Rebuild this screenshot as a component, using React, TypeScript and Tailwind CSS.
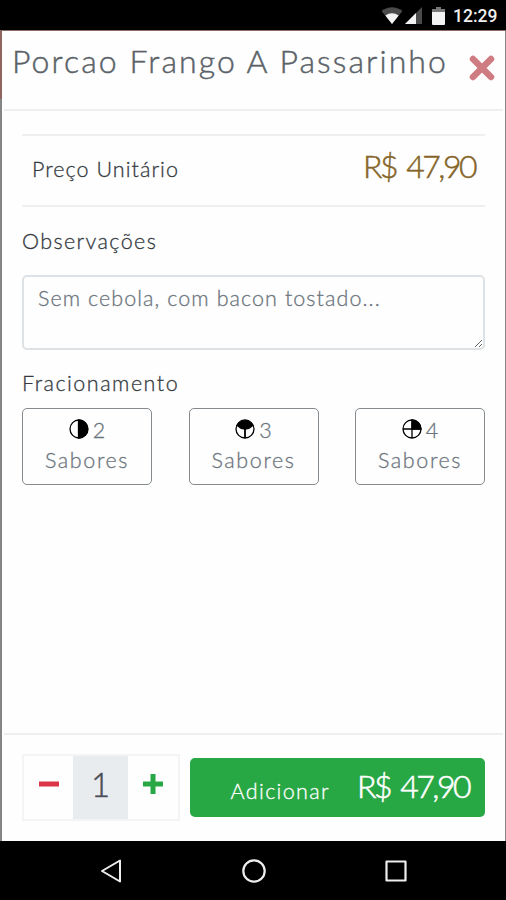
import React, { useState } from 'react';

const PRECO = 'R$ 47,90';

const StatusBar: React.FC = () => (
    <div className="h-[30px] shrink-0 bg-black flex items-center justify-end pr-[9px] pt-[2px]">
        <svg width="22" height="18" viewBox="0 0 22 18">
            <path d="M11 17 L0.5 4 Q11 -3.5 21.5 4 Z" fill="#4a4a4a" />
            <path d="M11 17 L4.3 8.5 Q11 3.8 17.7 8.5 Z" fill="#f2f2f2" />
        </svg>
        <svg className="ml-[2px]" width="17" height="18" viewBox="0 0 17 18">
            <path d="M17 0 V17 H0 Z" fill="#4a4a4a" />
            <path d="M11 6 V17 H0 Z" fill="#f2f2f2" />
        </svg>
        <svg className="ml-[10px]" width="13" height="18" viewBox="0 0 13 18">
            <path d="M4 0 H9 V2 H13 V5 H0 V2 H4 Z" fill="#777777" />
            <path d="M0 5 H13 V17 Q13 18 12 18 H1 Q0 18 0 17 Z" fill="#f2f2f2" />
        </svg>
        <span className="ml-[8px] w-[44px] font-['Roboto',sans-serif] font-medium text-[17.5px] leading-5 text-[#eeeeee] whitespace-nowrap [-webkit-text-stroke:0px]">12:29</span>
    </div>
);

const Fracao: React.FC<{ partes: number }> = ({ partes }) => (
    <svg width="20" height="20" viewBox="0 0 20 20" fill="none" stroke="#000" strokeWidth="1.3">
        <circle cx="10" cy="10" r="9" />
        {partes === 2 && <path d="M9.5 1 A9 9 0 0 1 9.5 19 Z" fill="#000" />}
        {partes === 3 && (
            <>
                <path d="M2.2 6.5 A9 9 0 0 1 17.8 6.5 Q14.5 9.8 10 10.2 Q5.5 9.8 2.2 6.5 Z" fill="#000" />
                <path d="M10 10 V19" strokeWidth="1.8" />
            </>
        )}
        {partes === 4 && (
            <>
                <path d="M10 10 V1 A9 9 0 0 1 19 10 Z" fill="#000" />
                <path d="M10 1 V19 M1 10 H19" />
            </>
        )}
    </svg>
);

const App: React.FC = () => {
    const [quantidade, setQuantidade] = useState(1);

    return (
        <div className="w-[506px] h-[900px] flex flex-col bg-black overflow-hidden font-['Lato',sans-serif] font-light text-[#343a40] [-webkit-text-stroke:0.3px]">
            <StatusBar />
            <div className="h-[811px] shrink-0 flex border-t border-[#8a6a62]">
                <div className="w-[2px] flex flex-col">
                    <div className="h-[68px] bg-[#8f6560]"></div>
                    <div className="flex-1 bg-[#858585]"></div>
                </div>

                <div className="w-[503px] bg-[#fefefe] flex flex-col">
                    <header className="h-[80px] mx-[2px] border-b-2 border-[#eeeff0] flex justify-between pl-[8px] pr-[8px]">
                        <h1 className="pt-[10px] text-[32px] leading-10 font-light tracking-[2.1px] text-[#5a6268] whitespace-nowrap [-webkit-text-stroke:0.45px]">Porcao Frango A Passarinho</h1>
                        <button className="mt-[24px] h-[26px]">
                            <svg width="26" height="26" viewBox="0 0 26 26" stroke="#cf7b82" strokeWidth="6.5" strokeLinecap="round">
                                <path d="M4 4 L22 22 M22 4 L4 22" />
                            </svg>
                        </button>
                    </header>

                    <main className="flex-1 px-5 pt-[23px]">
                        <div className="h-[73px] border-y-2 border-[#efefef] flex justify-between pl-[10px] pr-[10px]">
                            <span className="pt-[19px] text-[21.5px] leading-7 tracking-[1.05px]">Preço Unitário</span>
                            <span className="pt-[10px] text-[32px] leading-10 tracking-[-2.5px] [word-spacing:4px] text-[#856428] [-webkit-text-stroke:0.5px]">{PRECO}</span>
                        </div>

                        <label className="block mt-[20px] text-[21.5px] leading-7 tracking-[1.4px]">Observações</label>
                        <textarea
                            className="block mt-[20px] w-full h-[75px] resize rounded-[5px] border-2 border-[#dfe2e4] px-[14px] py-[7px] text-[21.5px] leading-7 tracking-[1.07px] placeholder:text-[#6c757d] outline-none"
                            placeholder="Sem cebola, com bacon tostado..."
                        />

                        <label className="block mt-[19px] text-[21.5px] leading-7 tracking-[1.5px]">Fracionamento</label>
                        <div className="mt-[11px] flex justify-between">
                            {[2, 3, 4].map((partes) => (
                                <button key={partes} className="w-[130px] h-[77px] rounded-[5px] border-[1.5px] border-[#858a8e] pt-[6px] flex flex-col items-center text-[21.5px] leading-[30px] text-[#6c757d]">
                                    <span className="flex gap-1"><span className="pt-[4px]"><Fracao partes={partes} /></span>{partes}</span>
                                    <span className="tracking-[1.6px]">Sabores</span>
                                </button>
                            ))}
                        </div>
                    </main>

                    <footer className="h-[108px] mx-[2px] border-t-2 border-[#eeeff0] pl-[18px] pr-[18px] flex">
                        <div className="mt-[19px] w-[158px] h-[67px] border-2 border-[#f3f4f5] flex">
                            <button className="w-[49px] flex justify-center pt-[18px]" onClick={() => setQuantidade(Math.max(1, quantidade - 1))}>
                                <svg width="20" height="20" viewBox="0 0 20 20"><path d="M0 7.5 H20 V12.5 H0 Z" fill="#dc3545" /></svg>
                            </button>
                            <span className="w-[55px] bg-[#e9ecef] text-center text-[33px] leading-[57px] text-[#495057] [-webkit-text-stroke:0.5px]">{quantidade}</span>
                            <button className="flex-1 flex justify-center pt-[18px]" onClick={() => setQuantidade(quantidade + 1)}>
                                <svg width="20" height="20" viewBox="0 0 20 20"><path d="M7.5 0 H12.5 V7.5 H20 V12.5 H12.5 V20 H7.5 V12.5 H0 V7.5 H7.5 Z" fill="#28a745" /></svg>
                            </button>
                        </div>
                        <button className="mt-[23px] ml-[10px] w-[296px] h-[59px] rounded-[5px] bg-[#28a745] text-white flex justify-between pl-[41px] pr-[16px]">
                            <span className="pt-[19px] text-[21.5px] leading-7 tracking-[1.35px]">Adicionar</span>
                            <span className="pt-[8px] text-[32px] leading-10 tracking-[-2.5px] [word-spacing:4px] [-webkit-text-stroke:0.6px]">{PRECO}</span>
                        </button>
                    </footer>
                </div>
                <div className="w-[1px] bg-[#858585]"></div>
            </div>

            <nav className="flex-1 bg-black flex items-center justify-between pl-[100px] pr-[99px]">
                <svg width="22" height="24" viewBox="0 0 22 24" fill="none" stroke="#eee" strokeWidth="2" strokeLinejoin="round">
                    <path d="M20 1.5 V22.5 L2 12 Z" />
                </svg>
                <svg width="24" height="24" viewBox="0 0 24 24" fill="none" stroke="#eee" strokeWidth="2.2">
                    <circle cx="12" cy="12" r="10.7" />
                </svg>
                <svg width="22" height="22" viewBox="0 0 22 22" fill="none" stroke="#eee" strokeWidth="2.2" strokeLinejoin="round">
                    <path d="M1.5 1.5 H20.5 V20.5 H1.5 Z" />
                </svg>
            </nav>
        </div>
    );
};

export default App;
